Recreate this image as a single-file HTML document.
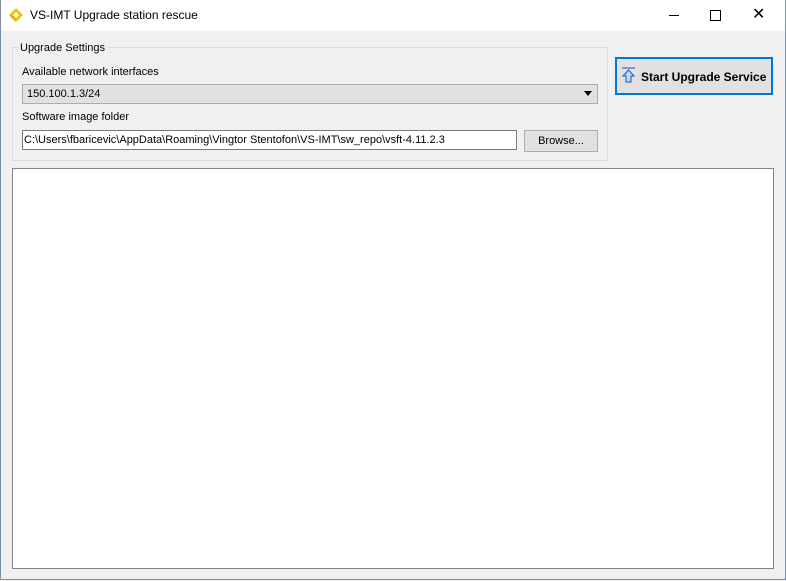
<!DOCTYPE html><html><head><style>
body{margin:0;width:786px;height:581px;background:#f0f0f0;font-family:"Liberation Sans",sans-serif;font-size:12px;color:#000;position:relative;overflow:hidden}
.a{position:absolute}
</style></head><body>
<div class="a" style="left:0;top:0;width:784px;height:579px;border:1px solid #7a8fa8;border-top:none"></div>
<div class="a" style="left:1px;top:0;width:784px;height:31px;background:#fff"></div>
<svg class="a" style="left:8px;top:7px" width="16" height="16" viewBox="0 0 16 16"><path d="M8 1 L15 8 L8 15 L1 8 Z" fill="#f5c400"/><path d="M5 8 L8 5 L11 8 L8 11 Z" fill="#fff"/><path d="M1 8 L4 8 L8 12 L8 15 Z" fill="#e0a800"/></svg>
<div class="a" style="left:30px;top:8px;font-size:12px">VS-IMT Upgrade station rescue</div>
<div class="a" style="left:669px;top:15px;width:10px;height:1px;background:#000"></div>
<div class="a" style="left:710px;top:10px;width:9px;height:9px;border:1px solid #000"></div>
<div class="a" style="left:752px;top:4px;font-size:16px">✕</div>
<div class="a" style="left:12px;top:47px;width:594px;height:112px;border:1px solid #dcdcdc"></div>
<div class="a" style="left:18px;top:42px;background:#f0f0f0;padding:0 2px;font-size:11px">Upgrade Settings</div>
<div class="a" style="left:22px;top:66px;font-size:11px">Available network interfaces</div>
<div class="a" style="left:22px;top:84px;width:574px;height:18px;border:1px solid #adadad;background:#e1e1e1"></div>
<div class="a" style="left:27px;top:88px;font-size:11px">150.100.1.3/24</div>
<div class="a" style="left:584px;top:91px;width:0;height:0;border-left:4px solid transparent;border-right:4px solid transparent;border-top:5px solid #000"></div>
<div class="a" style="left:22px;top:111px;font-size:11px">Software image folder</div>
<div class="a" style="left:22px;top:130px;width:493px;height:18px;border:1px solid #7a7a7a;background:#fff"></div>
<div class="a" style="left:24px;top:134px;font-size:11px;white-space:nowrap">C:\Users\fbaricevic\AppData\Roaming\Vingtor Stentofon\VS-IMT\sw_repo\vsft-4.11.2.3</div>
<div class="a" style="left:524px;top:130px;width:72px;height:20px;border:1px solid #adadad;background:#e1e1e1;text-align:center;line-height:20px;font-size:11px">Browse...</div>
<div class="a" style="left:615px;top:57px;width:154px;height:34px;border:2px solid #0078d7;background:#e1e1e1"></div>
<svg class="a" style="left:621px;top:67px" width="16" height="17" viewBox="0 0 16 17"><line x1="1" y1="1" x2="14" y2="1" stroke="#2050c0"/><path d="M7.5 3 L13 9 L10 9 L10 15 L5 15 L5 9 L2 9 Z" fill="#bcd8f8" stroke="#2050c0"/></svg>
<div class="a" style="left:641px;top:70px;font-weight:bold;font-size:12px">Start Upgrade Service</div>
<div class="a" style="left:12px;top:168px;width:760px;height:399px;border:1px solid #828282;background:#fff"></div>
</body></html>
